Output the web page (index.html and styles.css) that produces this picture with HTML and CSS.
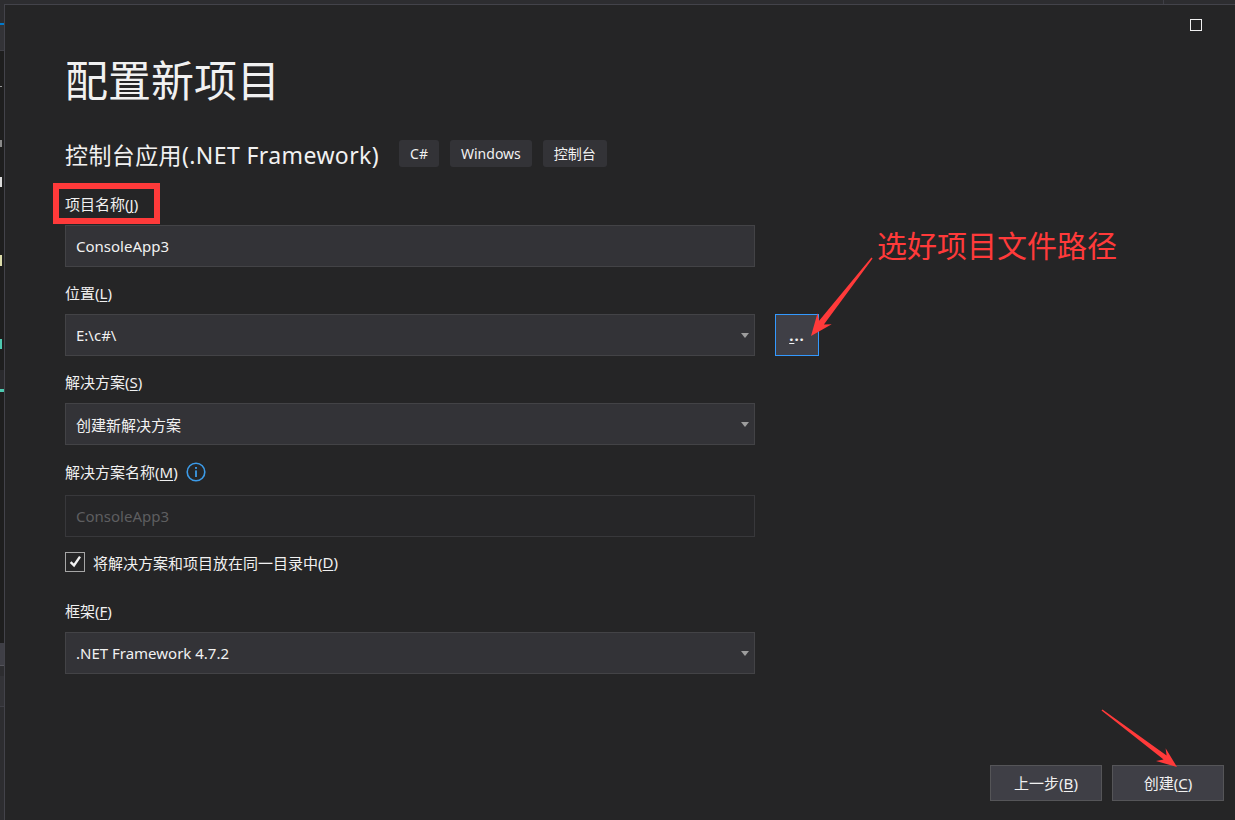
FILE: index.html
```html
<!DOCTYPE html>
<html lang="zh-CN">
<head>
  <meta charset="UTF-8">
  <meta name="viewport" content="width=device-width, initial-scale=1.0">
  <title>配置新项目</title>
  <link rel="stylesheet" href="styles.css">
</head>
<body>
  <div class="top-strip"><span class="top-split"></span></div>
  <div class="workspace">
    <!-- IDE behind the dialog, only a sliver is visible -->
    <div class="ide-strip">
      <div class="strip-title"></div>
      <div class="strip-accent"></div>
      <div class="strip-tabs"></div>
      <div class="strip-code">
        <div class="frag frag-dash"></div>
        <div class="frag frag-gray"></div>
        <div class="frag frag-white"></div>
        <div class="frag frag-yellow"></div>
        <div class="frag frag-teal"></div>
      </div>
      <div class="strip-band"></div>
      <div class="strip-code strip-code-low"></div>
      <div class="strip-panel"></div>
      <div class="strip-panel-head"></div>
      <div class="strip-panel-row"></div>
      <div class="strip-panel-foot"></div>
    </div>

    <div class="dialog">
      <div class="win-controls"><span class="max-btn"></span></div>

      <div class="content">
        <h1 class="title">配置新项目</h1>
        <div class="subtitle-row">
          <span class="subtitle">控制台应用(.NET Framework)</span>
          <span class="tag">C#</span>
          <span class="tag">Windows</span>
          <span class="tag">控制台</span>
        </div>

        <div class="field field-first">
          <div class="field-label">项目名称(<u>J</u>)</div>
          <div class="text-input">ConsoleApp3</div>
        </div>

        <div class="field">
          <div class="field-label">位置(<u>L</u>)</div>
          <div class="location-row">
            <div class="combo">
              <span class="combo-text">E:\c#\</span>
              <span class="caret"></span>
            </div>
            <div class="browse-btn"><u>.</u>..</div>
          </div>
        </div>

        <div class="field">
          <div class="field-label">解决方案(<u>S</u>)</div>
          <div class="combo">
            <span class="combo-text">创建新解决方案</span>
            <span class="caret"></span>
          </div>
        </div>

        <div class="field field-info">
          <div class="field-label">
            解决方案名称(<u>M</u>)
            <svg class="info-icon" width="20" height="20" viewBox="0 0 20 20">
              <circle cx="10" cy="10" r="8.8" fill="none" stroke="#3c9be8" stroke-width="1.6"/>
              <rect x="9.1" y="5" width="1.8" height="1.9" fill="#3c9be8"/>
              <rect x="9.1" y="8.4" width="1.8" height="6.6" fill="#3c9be8"/>
            </svg>
          </div>
          <div class="text-input is-disabled">ConsoleApp3</div>
        </div>

        <label class="check-row">
          <span class="checkbox">
            <svg width="18" height="18" viewBox="0 0 18 18">
              <path d="M4.6 9.2 L8 12.4 L14 3.6" fill="none" stroke="#f1f1f1" stroke-width="2.4"/>
            </svg>
          </span>
          将解决方案和项目放在同一目录中(<u>D</u>)
        </label>

        <div class="field field-framework">
          <div class="field-label">框架(<u>F</u>)</div>
          <div class="combo">
            <span class="combo-text">.NET Framework 4.7.2</span>
            <span class="caret"></span>
          </div>
        </div>
      </div>

      <div class="footer">
        <div class="btn">上一步(<u>B</u>)</div>
        <div class="btn">创建(<u>C</u>)</div>
      </div>
    </div>
  </div>

  <!-- red marks drawn on top of the screenshot -->
  <div class="annotations">
    <div class="mark-box"></div>
    <div class="mark-text">选好项目文件路径</div>
    <svg class="mark-arrows" width="1235" height="820" viewBox="0 0 1235 820">
      <polygon fill="#ff3a3a" points="872.6,258.5 823.9,324.4 831.7,324.2 811,336 817.5,313.2 819.1,320.7 871.4,257.5"/>
      <polygon fill="#ff3a3a" points="1101.5,710.6 1163.6,759.6 1156,761 1177,767 1165.6,748.2 1166.6,755.6 1102.5,709.4"/>
    </svg>
  </div>
</body>
</html>
```

FILE: styles.css
```css
html, body {
  margin: 0;
  padding: 0;
  width: 100%;
  height: 100%;
}
body {
  position: relative;
  overflow: hidden;
  background-color: #2d2d30;
  color: #f1f1f1;
  font-family: "Noto Sans", "Noto Sans CJK SC", sans-serif;
  font-size: 15px;
}
u {
  text-decoration: underline;
  text-underline-offset: 2px;
}

/* strip of the IDE window around the dialog */
.top-strip {
  position: relative;
  height: 4px;
  background-color: #2d2d30;
}
.top-split {
  position: absolute;
  top: 0;
  left: 1163px;
  width: 1px;
  height: 4px;
  background-color: #3f3f46;
}
.workspace {
  display: flex;
  height: 816px;
}
.ide-strip {
  display: flex;
  flex-direction: column;
  width: 4px;
  flex-shrink: 0;
  background-color: #1e1e1e;
}
.strip-title {
  height: 19px;
  background-color: #2d2d30;
}
.strip-accent {
  height: 2px;
  background-color: #007acc;
}
.strip-tabs {
  height: 25px;
  background-color: #333337;
  border-bottom: 1px solid #3f3f46;
}
.strip-code {
  height: 319px;
  background-color: #1e1e1e;
}
.strip-code-low {
  height: 251px;
}
.frag {
  width: 2px;
}
.frag-dash {
  height: 1px;
  margin-top: 35px;
  background-color: #9a9a9a;
}
.frag-gray {
  height: 7px;
  margin-top: 53px;
  background-color: #8a8a8a;
}
.frag-white {
  height: 10px;
  margin-top: 30px;
  background-color: #dcdcdc;
}
.frag-yellow {
  height: 11px;
  margin-top: 68px;
  background-color: #dcdcaa;
}
.frag-teal {
  height: 10px;
  margin-top: 73px;
  background-color: #4ec9b0;
}
.strip-band {
  height: 22px;
  background-color: #2a2a2d;
  box-shadow: inset 0 -10px 0 -7px #4ec9b0;
}
.strip-panel {
  height: 22px;
  background-color: #3f3f46;
}
.strip-panel-head {
  height: 10px;
  background-color: #2d2d30;
  border-top: 1px solid #55555c;
}
.strip-panel-row {
  height: 30px;
  background-color: #333337;
}
.strip-panel-foot {
  flex: 1;
  background-color: #2d2d30;
  border-top: 1px solid #3f3f46;
}

/* the dialog */
.dialog {
  flex: 1;
  display: flex;
  flex-direction: column;
  border-top: 1px solid #43434a;
  border-left: 1px solid #43434a;
  background-color: #252526;
}
.win-controls {
  display: flex;
  justify-content: flex-end;
  padding: 14px 33px 0 0;
}
.max-btn {
  width: 12px;
  height: 12px;
  border: 1.5px solid #f1f1f1;
  box-sizing: border-box;
}
.content {
  padding-left: 60px;
}
.title {
  margin: 25px 0 0;
  height: 50px;
  line-height: 50px;
  font-size: 43px;
  font-weight: normal;
  white-space: nowrap;
}
.subtitle-row {
  display: flex;
  align-items: center;
  margin-top: 34px;
  height: 27px;
}
.subtitle {
  font-size: 23px;
  letter-spacing: 0.4px;
  margin-right: 20px;
  white-space: nowrap;
}
.tag {
  height: 27px;
  line-height: 27px;
  padding: 0 11px;
  margin-right: 11px;
  border-radius: 3px;
  background-color: #333337;
  font-size: 14px;
}

.field {
  margin-top: 16px;
}
.field-first {
  margin-top: 27px;
}
.field-info {
  margin-top: 17px;
}
.field-framework {
  margin-top: 29px;
}
.field-label {
  display: flex;
  align-items: center;
  height: 20px;
  line-height: 20px;
  margin-bottom: 11px;
  white-space: nowrap;
}
.field-info .field-label {
  margin-bottom: 13px;
}
.info-icon {
  margin-left: 8px;
}
.text-input, .combo {
  display: flex;
  align-items: center;
  width: 690px;
  height: 42px;
  flex-shrink: 0;
  box-sizing: border-box;
  padding: 0 5px 0 10px;
  border: 1px solid #434346;
  background-color: #333337;
}
.text-input.is-disabled {
  border-color: #38383b;
  background-color: #262628;
  color: #5e5e60;
}
.combo-text {
  flex: 1;
}
.caret {
  width: 0;
  height: 0;
  border-left: 4px solid transparent;
  border-right: 4px solid transparent;
  border-top: 5px solid #9d9d9d;
}
.location-row {
  display: flex;
}
.browse-btn {
  width: 44px;
  height: 42px;
  margin-left: 20px;
  flex-shrink: 0;
  box-sizing: border-box;
  border: 1px solid #3399ff;
  background-color: #3f3f46;
  text-align: center;
  line-height: 40px;
  font-size: 15px;
  font-weight: bold;
  letter-spacing: 1px;
}

.check-row {
  display: flex;
  align-items: center;
  margin-top: 15px;
  height: 20px;
  white-space: nowrap;
}
.checkbox {
  display: flex;
  align-items: center;
  justify-content: center;
  width: 20px;
  height: 20px;
  box-sizing: border-box;
  border: 1px solid #a6a6a6;
  margin-right: 8px;
}

.footer {
  display: flex;
  justify-content: flex-end;
  gap: 10px;
  margin-top: auto;
  padding: 0 11px 19px 0;
}
.btn {
  width: 112px;
  height: 36px;
  box-sizing: border-box;
  border: 1px solid #555558;
  background-color: #3f3f46;
  text-align: center;
  line-height: 34px;
}

/* red marks */
.annotations {
  position: absolute;
  left: 0;
  top: 0;
  width: 1235px;
  height: 820px;
  pointer-events: none;
}
.mark-box {
  position: absolute;
  left: 53px;
  top: 183px;
  width: 107px;
  height: 41px;
  box-sizing: border-box;
  border: 6px solid #ff3a3a;
}
.mark-text {
  position: absolute;
  left: 877px;
  top: 229px;
  line-height: 34px;
  font-size: 30px;
  color: #ff3a3a;
  white-space: nowrap;
}
.mark-arrows {
  position: absolute;
  left: 0;
  top: 0;
}
```
